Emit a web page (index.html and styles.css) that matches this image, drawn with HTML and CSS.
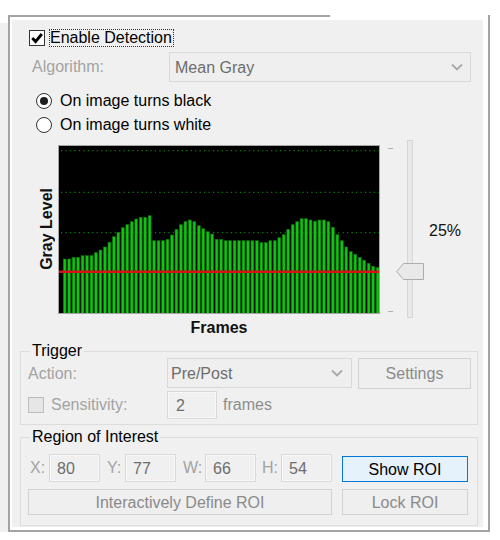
FILE: index.html
```html
<!DOCTYPE html>
<html>
<head>
<meta charset="utf-8">
<link rel="stylesheet" href="styles.css">
</head>
<body>
<div class="frame">
  <div class="panel">
    <div class="enable-row">
      <span class="cb"><svg width="14" height="14" viewBox="0 0 14 14"><polyline points="2.3,7 5.6,10.6 11.8,3" fill="none" stroke="#000" stroke-width="2.9" stroke-linejoin="miter"/></svg></span>
      <span class="focus-label">Enable Detection</span>
    </div>
    <div class="algo-row">
      <span class="dis algo-label">Algorithm:</span>
      <div class="combo algo-combo"><span>Mean Gray</span><svg width="12" height="8" viewBox="0 0 12 8"><path d="M1 1.5 L6 6.5 L11 1.5" fill="none" stroke="#a8a8a8" stroke-width="1.8"/></svg></div>
    </div>
    <div class="radio-row r1"><span class="radio on"></span><span>On image turns black</span></div>
    <div class="radio-row r2"><span class="radio"></span><span>On image turns white</span></div>
    <div class="chart-section">
      <div class="ylabel-col"><span class="ylabel">Gray Level</span></div>
      <div class="chart">
        <svg width="320" height="167" viewBox="0 0 320 167">
          <g stroke="#0a800a" stroke-width="1.2" stroke-dasharray="1.2 3.27">
            <line x1="2" y1="4.7" x2="320" y2="4.7"/>
            <line x1="2" y1="46.3" x2="320" y2="46.3"/>
            <line x1="2" y1="86.7" x2="320" y2="86.7"/>
          </g>
          <g fill="#14c314" stroke="#077807" stroke-width="0.6">
            <rect x="4.30" y="113" width="2.8" height="60"/>
            <rect x="8.77" y="113" width="2.8" height="60"/>
            <rect x="13.24" y="111.3" width="2.8" height="60"/>
            <rect x="17.71" y="111.3" width="2.8" height="60"/>
            <rect x="22.18" y="109.7" width="2.8" height="60"/>
            <rect x="26.65" y="109.7" width="2.8" height="60"/>
            <rect x="31.12" y="109.7" width="2.8" height="60"/>
            <rect x="35.59" y="106.7" width="2.8" height="65"/>
            <rect x="40.06" y="104" width="2.8" height="65"/>
            <rect x="44.53" y="101" width="2.8" height="70"/>
            <rect x="49.00" y="96.3" width="2.8" height="75"/>
            <rect x="53.47" y="90.7" width="2.8" height="80"/>
            <rect x="57.94" y="86.3" width="2.8" height="85"/>
            <rect x="62.41" y="81.7" width="2.8" height="90"/>
            <rect x="66.88" y="78.7" width="2.8" height="90"/>
            <rect x="71.35" y="75.7" width="2.8" height="95"/>
            <rect x="75.82" y="73" width="2.8" height="95"/>
            <rect x="80.29" y="71.3" width="2.8" height="100"/>
            <rect x="84.76" y="71.3" width="2.8" height="100"/>
            <rect x="89.23" y="69.7" width="2.8" height="100"/>
            <rect x="93.70" y="94.7" width="2.8" height="75"/>
            <rect x="98.17" y="94.7" width="2.8" height="75"/>
            <rect x="102.64" y="94.7" width="2.8" height="75"/>
            <rect x="107.11" y="93.3" width="2.8" height="75"/>
            <rect x="111.58" y="89" width="2.8" height="80"/>
            <rect x="116.05" y="83.3" width="2.8" height="85"/>
            <rect x="120.52" y="78.7" width="2.8" height="90"/>
            <rect x="124.99" y="75.7" width="2.8" height="95"/>
            <rect x="129.46" y="74" width="2.8" height="95"/>
            <rect x="133.93" y="75.7" width="2.8" height="95"/>
            <rect x="138.40" y="79.7" width="2.8" height="90"/>
            <rect x="142.87" y="82.7" width="2.8" height="90"/>
            <rect x="147.34" y="85.7" width="2.8" height="85"/>
            <rect x="151.81" y="88" width="2.8" height="80"/>
            <rect x="156.28" y="93.3" width="2.8" height="75"/>
            <rect x="160.75" y="93.3" width="2.8" height="75"/>
            <rect x="165.22" y="94.7" width="2.8" height="75"/>
            <rect x="169.69" y="94.7" width="2.8" height="75"/>
            <rect x="174.16" y="94.7" width="2.8" height="75"/>
            <rect x="178.63" y="94.7" width="2.8" height="75"/>
            <rect x="183.10" y="94.7" width="2.8" height="75"/>
            <rect x="187.57" y="94.7" width="2.8" height="75"/>
            <rect x="192.04" y="94.7" width="2.8" height="75"/>
            <rect x="196.51" y="94.7" width="2.8" height="75"/>
            <rect x="200.98" y="96.7" width="2.8" height="75"/>
            <rect x="205.45" y="96.7" width="2.8" height="75"/>
            <rect x="209.92" y="94.7" width="2.8" height="75"/>
            <rect x="214.39" y="94.7" width="2.8" height="75"/>
            <rect x="218.86" y="91.7" width="2.8" height="80"/>
            <rect x="223.33" y="88.7" width="2.8" height="80"/>
            <rect x="227.80" y="83.3" width="2.8" height="85"/>
            <rect x="232.27" y="78.7" width="2.8" height="90"/>
            <rect x="236.74" y="75.7" width="2.8" height="95"/>
            <rect x="241.21" y="72.7" width="2.8" height="95"/>
            <rect x="245.68" y="72.7" width="2.8" height="95"/>
            <rect x="250.15" y="74" width="2.8" height="95"/>
            <rect x="254.62" y="75.3" width="2.8" height="95"/>
            <rect x="259.09" y="74" width="2.8" height="95"/>
            <rect x="263.56" y="74" width="2.8" height="95"/>
            <rect x="268.03" y="75.7" width="2.8" height="95"/>
            <rect x="272.50" y="81.3" width="2.8" height="90"/>
            <rect x="276.97" y="88.7" width="2.8" height="80"/>
            <rect x="281.44" y="94.7" width="2.8" height="75"/>
            <rect x="285.91" y="101" width="2.8" height="70"/>
            <rect x="290.38" y="105.7" width="2.8" height="65"/>
            <rect x="294.85" y="108.3" width="2.8" height="60"/>
            <rect x="299.32" y="111.3" width="2.8" height="60"/>
            <rect x="303.79" y="114.3" width="2.8" height="55"/>
            <rect x="308.26" y="117.3" width="2.8" height="55"/>
            <rect x="312.73" y="120.3" width="2.8" height="50"/>
            <rect x="317.20" y="121.7" width="2.8" height="50"/>
          </g>
          <line x1="0" y1="125.7" x2="320" y2="125.7" stroke="#d41414" stroke-width="2.6"/>
        </svg>
      </div>
      <div class="slider">
        <span class="tick t1"></span>
        <span class="tick t2"></span>
        <span class="track"></span>
        <svg class="thumb" width="28" height="17" viewBox="0 0 28 17"><path d="M0.7 8.5 L7.5 0.5 H27.5 V16.5 H7.5 Z" fill="#e9e9e9" stroke="#acacac" stroke-width="1"/></svg>
      </div>
      <div class="pct">25%</div>
    </div>
    <div class="xlabel">Frames</div>

    <fieldset class="group trigger">
      <legend>Trigger</legend>
      <div class="trigger-body">
        <div class="row action-row">
          <span class="dis action-label">Action:</span>
          <div class="combo pp-combo"><span>Pre/Post</span><svg width="12" height="8" viewBox="0 0 12 8"><path d="M1 1.5 L6 6.5 L11 1.5" fill="none" stroke="#a8a8a8" stroke-width="1.8"/></svg></div>
          <div class="btn settings">Settings</div>
        </div>
        <div class="row sens-row">
          <span class="cb dis-cb"></span>
          <span class="dis sens-label">Sensitivity:</span>
          <div class="input sens-input">2</div>
          <span class="frames">frames</span>
        </div>
      </div>
    </fieldset>

    <fieldset class="group roi">
      <legend>Region of Interest</legend>
      <div class="roi-body">
        <div class="row roi-row">
          <span class="dis coord lab-x">X:</span>
          <div class="input coord-input">80</div>
          <span class="dis coord lab-y">Y:</span>
          <div class="input coord-input">77</div>
          <span class="dis coord lab-w">W:</span>
          <div class="input coord-input">66</div>
          <span class="dis coord lab-h">H:</span>
          <div class="input coord-input">54</div>
          <div class="btn show-roi">Show ROI</div>
        </div>
        <div class="row roi-row2">
          <div class="btn define">Interactively Define ROI</div>
          <div class="btn lock">Lock ROI</div>
        </div>
      </div>
    </fieldset>
  </div>
</div>
</body>
</html>
```
FILE: styles.css
```css
* { box-sizing: border-box; }

body {
  margin: 0;
  background: #fff;
  font-family: "Liberation Sans", Arial, sans-serif;
  font-size: 16px;
  color: #000;
}

.frame {
  position: relative;
  margin: 15px 0 0 8px;
  width: 482px;
  height: 517px;
  background: #fff;
  border: solid #a3a3a3;
  border-width: 0 2px 2px 2px;
  padding: 5px 5px 3px 2px;
  box-shadow: -8px 8px 0 #f0f0f0;
}

.frame::before {
  content: "";
  position: absolute;
  top: 0;
  left: -2px;
  width: 322px;
  height: 2px;
  background: #a3a3a3;
}

.panel {
  height: 100%;
  background: #f0f0f0;
  padding: 0 5px 0 8px;
  display: flex;
  flex-direction: column;
}

.dis { color: #a3a3a3; }

/* checkbox */
.cb {
  width: 16px;
  height: 16px;
  flex: none;
  border: 1px solid #333;
  background: #fff;
  display: flex;
  align-items: center;
  justify-content: center;
}
.cb svg { display: block; }
.cb.dis-cb { border-color: #bdbdbd; background: #e6e6e6; }

.enable-row {
  margin-top: 9px;
  height: 18px;
  display: flex;
  align-items: center;
  padding-left: 9px;
}
.focus-label {
  margin-left: 4px;
  border: 1px dotted #333;
  line-height: 16px;
  padding: 0 1px 0 0;
}

.algo-row {
  margin-top: 5px;
  height: 30px;
  display: flex;
  align-items: center;
  padding-left: 12px;
}
.algo-label { width: 137px; }

.combo {
  display: flex;
  align-items: center;
  justify-content: space-between;
  height: 30px;
  border: 1px solid #d9d9d9;
  background: #efefef;
  color: #6d6d6d;
  padding: 2px 7px 0 5px;
}
.combo svg { display: block; margin-top: -2px; }
.algo-combo { width: 302px; }

.radio-row {
  height: 22px;
  display: flex;
  align-items: center;
  padding-left: 16px;
}
.r1 { margin-top: 8px; }
.r2 { margin-top: 2px; }
.radio {
  width: 16px;
  height: 16px;
  flex: none;
  border: 1px solid #333;
  border-radius: 50%;
  background: #fff;
  margin-right: 8px;
  display: flex;
  align-items: center;
  justify-content: center;
}
.radio.on::after {
  content: "";
  width: 8px;
  height: 8px;
  border-radius: 50%;
  background: #1e1e1e;
}

/* chart */
.chart-section {
  margin-top: 4px;
  height: 178px;
  display: flex;
  align-items: flex-start;
}
.ylabel-col {
  width: 38px;
  height: 178px;
  display: flex;
  align-items: center;
  justify-content: flex-end;
  padding-right: 2px;
}
.ylabel {
  writing-mode: vertical-rl;
  transform: rotate(180deg);
  font-weight: bold;
  line-height: 18px;
  color: #111;
}
.chart {
  margin-top: 5px;
  width: 322px;
  height: 169px;
  border: 1px solid #a5a5a5;
  background: #000;
}
.chart svg { display: block; }

.slider {
  position: relative;
  margin-left: 8px;
  width: 36px;
  height: 178px;
}
.tick {
  position: absolute;
  left: 0;
  width: 5px;
  height: 1px;
  background: #b0b0b0;
}
.t1 { top: 8px; }
.t2 { top: 171px; }
.track {
  position: absolute;
  left: 19px;
  top: 0;
  width: 6px;
  height: 178px;
  background: #e7eaea;
  border: 1px solid #d6d6d6;
}
.thumb {
  position: absolute;
  left: 8px;
  top: 123px;
  display: block;
}
.pct {
  margin-left: 5px;
  margin-top: 82px;
  line-height: 18px;
  color: #111;
}

.xlabel {
  margin-top: 1px;
  margin-left: 38px;
  width: 322px;
  height: 18px;
  line-height: 18px;
  text-align: center;
  font-weight: bold;
  color: #111;
}

/* group boxes */
fieldset.group {
  margin: 7px 0 0 0;
  padding: 0;
  border: 1px solid #dcdcdc;
  min-inline-size: 0;
}
fieldset.group legend {
  margin-left: 9px;
  padding: 0 2px;
  line-height: 14px;
  color: #000;
}
fieldset.roi { margin-top: 5px; }

.row { display: flex; }

.trigger-body { padding: 0 6px 5px 7px; }
.action-row { height: 31px; align-items: flex-start; }
.action-label {
  width: 139px;
  padding-top: 2px;
  line-height: 28px;
}
.pp-combo { width: 185px; padding-left: 3px; padding-right: 8px; }

.btn {
  display: flex;
  align-items: center;
  justify-content: center;
  border: 1px solid #d2d2d2;
  background: #efefef;
  color: #8a8a8a;
  padding-top: 1px;
}
.settings { margin-left: 6px; width: 113px; height: 31px; }

.sens-row { margin-top: 2px; height: 28px; align-items: center; }
.sens-label { margin-left: 7px; width: 116px; }

.input {
  display: flex;
  align-items: center;
  height: 28px;
  border: 1px solid #d9d9d9;
  background: #f0f0f0;
  box-shadow: inset 0 0 0 1px #f7f7f7;
  color: #6d6d6d;
  padding: 1px 0 0 7px;
}
.sens-input { width: 50px; padding-left: 8px; }
.frames { margin-left: 6px; color: #8d8d8d; }

.roi-body { padding: 10px 9px 10px 7px; }
.roi-row { height: 28px; align-items: flex-end; padding-left: 2px; }
.coord { align-self: center; }
.lab-x { width: 19px; }
.lab-y { margin-left: 7px; width: 18px; }
.lab-w { margin-left: 7px; width: 22px; }
.lab-h { margin-left: 6px; width: 19px; }
.coord-input { width: 51px; }
.show-roi {
  margin-left: 10px;
  width: 126px;
  height: 26px;
  background: #e5f1fb;
  border-color: #0078d7;
  color: #000;
}
.roi-row2 { margin-top: 7px; height: 26px; }
.define { width: 304px; height: 26px; }
.lock { margin-left: 10px; width: 126px; height: 26px; }
```
